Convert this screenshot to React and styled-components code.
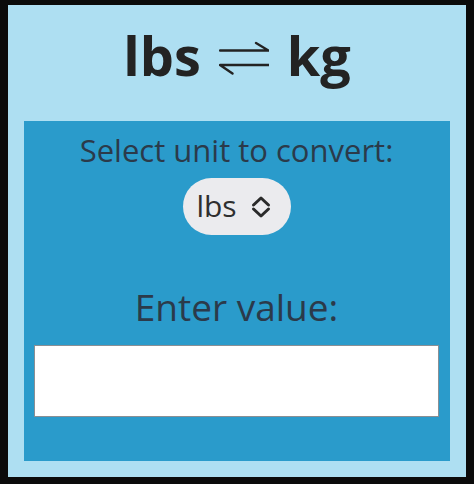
import React, { useState } from 'react';
import styled, { createGlobalStyle } from 'styled-components';

const GlobalStyle = createGlobalStyle`
	html, body {
		margin: 0;
		padding: 0;
		background: #000;
	}
	body {
		font-family: 'Open Sans', 'Noto Sans', sans-serif;
	}
`;

const App = () => {
	const [value, setValue] = useState('');

	return (
		<>
			<GlobalStyle />
			<Frame>
				<Card>
					<Title>
						<span>lbs</span>
						<SwapIcon viewBox="0 0 50 34" aria-label="⇌">
							<path d="M1 9.5H49.5L37 2" />
							<path d="M49.5 24H1L13.5 32.5" />
						</SwapIcon>
						<span>kg</span>
					</Title>
					<Panel>
						<Label>Select unit to convert:</Label>
						<UnitSelect>
							<span>lbs</span>
							<Chevrons viewBox="0 0 20 24">
								<path d="M2.5 10L10 3L17.5 10" />
								<path d="M2.5 14L10 21L17.5 14" />
							</Chevrons>
						</UnitSelect>
						<ValueLabel>Enter value:</ValueLabel>
						<Input value={value} onChange={(e) => setValue(e.target.value)} />
					</Panel>
				</Card>
			</Frame>
		</>
	);
};

const Frame = styled.div`
	width: 474px;
	height: 484px;
	box-sizing: border-box;
	padding: 5px 8px 7px 8px;
	background: #0b0b0b;
`;

const Card = styled.div`
	height: 100%;
	box-sizing: border-box;
	background: #aedff2;
	display: flex;
	flex-direction: column;
	padding: 0 16px 16px;
`;

const Title = styled.h1`
	margin: 0;
	height: 116px;
	box-sizing: border-box;
	padding-bottom: 17px;
	display: flex;
	align-items: center;
	justify-content: center;
	gap: 18px;
	font-size: 54px;
	font-weight: 700;
	color: #232323;
`;

const SwapIcon = styled.svg`
	width: 50px;
	height: 34px;
	margin-top: 6px;
	fill: none;
	stroke: #232323;
	stroke-width: 2.4;
	stroke-linecap: round;
	stroke-linejoin: round;
`;

const Panel = styled.div`
	flex: 1;
	background: #2a9bcb;
	display: flex;
	flex-direction: column;
	align-items: center;
	padding: 8px 11px 44px 10px;
	color: #2b3a4a;
`;

const Label = styled.div`
	font-size: 31px;
	line-height: 42px;
`;

const ValueLabel = styled.div`
	font-size: 37px;
	line-height: 50px;
	margin-top: 47px;
`;

const UnitSelect = styled.div`
	margin-top: 7px;
	width: 108px;
	height: 57px;
	box-sizing: border-box;
	border-radius: 29px;
	background: #ebebee;
	display: flex;
	align-items: center;
	justify-content: center;
	gap: 14px;
	font-size: 30px;
	color: #2f2f2f;
	padding: 0 6px 2px 0;
`;

const Chevrons = styled.svg`
	width: 20px;
	height: 24px;
	margin-top: 2px;
	fill: none;
	stroke: #2a2a2a;
	stroke-width: 3;
	stroke-linecap: round;
	stroke-linejoin: round;
`;

const Input = styled.input`
	margin-top: 13px;
	width: 100%;
	height: 72px;
	box-sizing: border-box;
	border: 1px solid #8a8f94;
	background: #fff;
	font-size: 28px;
	padding: 0 10px;
	outline: none;
`;

export default App;
